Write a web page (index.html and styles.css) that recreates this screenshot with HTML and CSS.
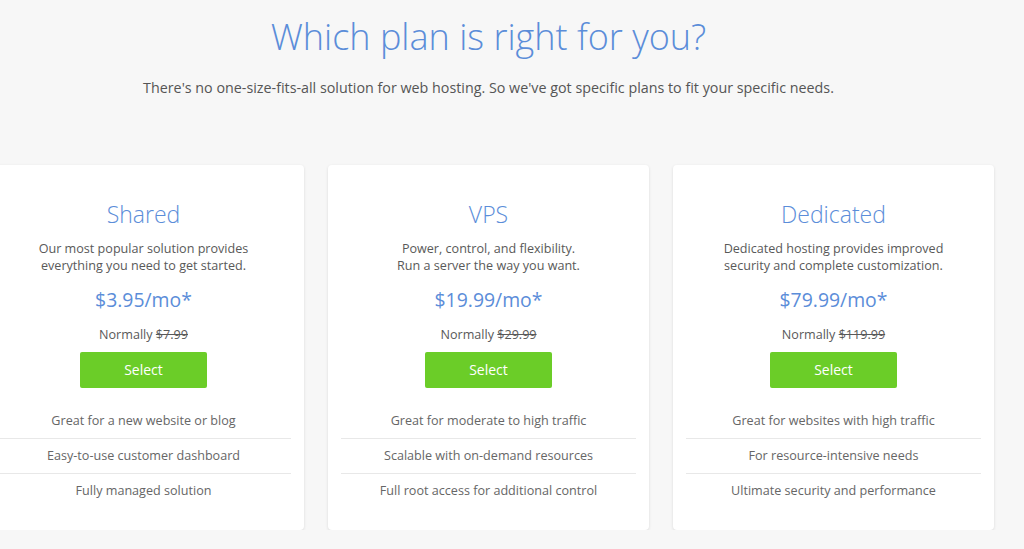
FILE: index.html
```html
<!DOCTYPE html>
<html>
<head>
<meta charset="utf-8">
<link rel="stylesheet" href="styles.css">
</head>
<body>
<div class="wrap">
  <h1 class="title">Which plan is right for you?</h1>
  <p class="subtitle">There's no one-size-fits-all solution for web hosting. So we've got specific plans to fit your specific needs.</p>
  <div class="cards">
    <div class="card">
      <h2 class="name">Shared</h2>
      <p class="desc">Our most popular solution provides<br>everything you need to get started.</p>
      <div class="price">$3.95/mo*</div>
      <div class="normal">Normally <s>$7.99</s></div>
      <a class="btn">Select</a>
      <ul class="features">
        <li>Great for a new website or blog</li>
        <li>Easy-to-use customer dashboard</li>
        <li>Fully managed solution</li>
      </ul>
    </div>
    <div class="card">
      <h2 class="name">VPS</h2>
      <p class="desc">Power, control, and flexibility.<br>Run a server the way you want.</p>
      <div class="price">$19.99/mo*</div>
      <div class="normal">Normally <s>$29.99</s></div>
      <a class="btn">Select</a>
      <ul class="features">
        <li>Great for moderate to high traffic</li>
        <li>Scalable with on-demand resources</li>
        <li>Full root access for additional control</li>
      </ul>
    </div>
    <div class="card">
      <h2 class="name">Dedicated</h2>
      <p class="desc">Dedicated hosting provides improved<br>security and complete customization.</p>
      <div class="price">$79.99/mo*</div>
      <div class="normal">Normally <s>$119.99</s></div>
      <a class="btn">Select</a>
      <ul class="features">
        <li>Great for websites with high traffic</li>
        <li>For resource-intensive needs</li>
        <li>Ultimate security and performance</li>
      </ul>
    </div>
  </div>
</div>
</body>
</html>
```
FILE: styles.css
```css
html, body {
  margin: 0;
  padding: 0;
  background: #f7f7f7;
  font-family: "Open Sans", "Liberation Sans", sans-serif;
  overflow: hidden;
}
.wrap {
  width: 1011px;
  margin-left: -17px;
  text-align: center;
}
.title {
  margin: 0;
  padding-top: 13px;
  font-size: 36px;
  line-height: 48px;
  font-weight: 300;
  color: #5b8dd9;
}
.subtitle {
  margin: 17px 0 0;
  font-size: 14.3px;
  line-height: 20px;
  color: #555;
}
.cards {
  display: flex;
  gap: 24px;
  margin-top: 67px;
}
.card {
  width: 321px;
  box-sizing: border-box;
  background: #fff;
  border-radius: 4px;
  box-shadow: 0 1px 3px rgba(0,0,0,0.12);
  padding: 34px 13px 22px;
}
.name {
  margin: 0;
  font-size: 23px;
  line-height: 30px;
  font-weight: 300;
  color: #5b8dd9;
}
.desc {
  margin: 11px 0 0;
  font-size: 12.6px;
  line-height: 17px;
  color: #595959;
}
.price {
  margin-top: 13px;
  font-size: 19.4px;
  line-height: 26px;
  color: #5b8dd9;
}
.normal {
  margin-top: 13px;
  font-size: 12.6px;
  line-height: 18px;
  color: #595959;
}
.btn {
  display: block;
  width: 127px;
  height: 36px;
  margin: 8px auto 0;
  background: #6bcd28;
  border-radius: 2px;
  color: #fff;
  font-size: 14px;
  line-height: 36px;
}
.features {
  list-style: none;
  margin: 15px 0 0;
  padding: 0;
}
.features li {
  line-height: 34px;
  font-size: 12.6px;
  color: #666;
  border-top: 1px solid #e8e8e8;
}
.features li:first-child {
  border-top-color: transparent;
}
```
